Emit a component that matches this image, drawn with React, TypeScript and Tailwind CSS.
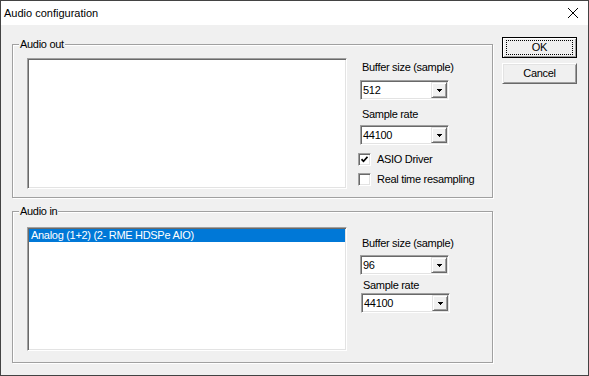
import { ReactNode } from "react";

const sunken =
  "border border-t-[#a0a0a0] border-l-[#a0a0a0] border-r-white border-b-white shadow-[inset_1px_1px_0_#696969,inset_-1px_-1px_0_#e3e3e3]";

const GroupBox = ({
  title,
  className,
  children,
}: {
  title: string;
  className: string;
  children: ReactNode;
}) => (
  <div
    className={`relative w-[481px] border border-[#a0a0a0] shadow-[inset_1px_1px_0_#fff,1px_1px_0_#fff] ${className}`}
  >
    <span className="absolute left-[6px] top-[-7px] bg-[#f0f0f0] px-[1px] leading-[13px]">
      {title}
    </span>
    {children}
  </div>
);

const ComboBox = ({ value, className = "" }: { value: string; className?: string }) => (
  <div className={`flex h-[20px] w-[89px] items-stretch bg-white ${sunken} ${className}`}>
    <div className="flex flex-1 items-center pl-[2px] leading-[13px]">{value}</div>
    <div className="mr-[1px] my-[1px] flex w-[16px] items-center justify-center border border-t-[#e3e3e3] border-l-[#e3e3e3] border-r-[#696969] border-b-[#696969] bg-[#f0f0f0] shadow-[inset_1px_1px_0_#fff,inset_-1px_-1px_0_#a0a0a0]">
      <svg width="5" height="3" viewBox="0 0 5 3" shapeRendering="crispEdges">
        <rect x="0" y="0" width="5" height="1" fill="#000" />
        <rect x="1" y="1" width="3" height="1" fill="#000" />
        <rect x="2" y="2" width="1" height="1" fill="#000" />
      </svg>
    </div>
  </div>
);

const CheckBox = ({ label, checked, className = "" }: { label: string; checked?: boolean; className?: string }) => (
  <div className={`-ml-[2px] flex h-[13px] items-center gap-[6px] ${className}`}>
    <div className={`flex h-[13px] w-[13px] items-center justify-center bg-white ${sunken}`}>
      {checked && (
        <svg width="7" height="7" viewBox="0 0 7 7">
          <path d="M0.5 3.2 L2.5 5.3 L6.5 0.8" fill="none" stroke="#000" strokeWidth="1.7" />
        </svg>
      )}
    </div>
    <span className="leading-[13px]">{label}</span>
  </div>
);

const AudioConfig = () => {
  return (
    <div className="flex h-[376px] w-[589px] flex-col border border-[#434343] bg-[#f0f0f0] font-['Liberation_Sans',Arial,sans-serif] text-[11px] tracking-[-0.3px] text-black">
      <div className="flex h-[24px] items-center justify-between bg-white pl-[3px] pr-[10px]">
        <span className="text-[11px] tracking-normal">Audio configuration</span>
        <svg width="10" height="10" viewBox="0 0 10 10">
          <path d="M0 0 L10 10 M10 0 L0 10" stroke="#000" strokeWidth="1" />
        </svg>
      </div>

      <div className="flex pl-[11px] pt-[12px]">
        <div className="mt-[7px] flex flex-col">
          <GroupBox title="Audio out" className="h-[154px]">
            <div className="flex pl-[14px] pt-[13px]">
              <div className={`h-[131px] w-[320px] bg-white ${sunken}`} />
              <div className="ml-[13px] flex flex-col">
                <span className="ml-[2px] mt-[3px] leading-[13px]">Buffer size (sample)</span>
                <ComboBox value="512" className="mt-[6px]" />
                <span className="ml-[2px] mt-[8px] leading-[13px]">Sample rate</span>
                <ComboBox value="44100" className="mt-[4px]" />
                <CheckBox label="ASIO Driver" checked className="mt-[8px]" />
                <CheckBox label="Real time resampling" className="mt-[7px]" />
              </div>
            </div>
          </GroupBox>

          <GroupBox title="Audio in" className="mt-[13px] h-[152px]">
            <div className="flex pl-[14px] pt-[15px]">
              <div className={`h-[124px] w-[320px] bg-white p-[1px] ${sunken}`}>
                <div className="flex h-[13px] items-center bg-[#0078d7] pl-[2px] leading-[13px] text-white">
                  Analog (1+2) (2- RME HDSPe AIO)
                </div>
              </div>
              <div className="ml-[13px] flex flex-col">
                <span className="ml-[2px] mt-[10px] leading-[13px]">Buffer size (sample)</span>
                <ComboBox value="96" className="mt-[5px]" />
                <span className="ml-[3px] mt-[4px] leading-[13px]">Sample rate</span>
                <ComboBox value="44100" className="ml-[1px] mt-[1px]" />
              </div>
            </div>
          </GroupBox>
        </div>

        <div className="ml-[9px] flex flex-col gap-[5px]">
          <button
            type="button"
            className="flex h-[21px] w-[75px] items-center justify-center border border-black bg-[#f0f0f0] shadow-[inset_1px_1px_0_#fff,inset_-1px_-1px_0_#a0a0a0]"
          >
            <span className="flex h-[15px] w-[67px] items-center justify-center border border-dotted border-black leading-[13px]">
              OK
            </span>
          </button>
          <button
            type="button"
            className="flex h-[21px] w-[75px] items-center justify-center border border-t-white border-l-white border-r-[#696969] border-b-[#696969] bg-[#f0f0f0] leading-[13px] shadow-[inset_1px_1px_0_#e3e3e3,inset_-1px_-1px_0_#a0a0a0]"
          >
            Cancel
          </button>
        </div>
      </div>
    </div>
  );
};

export default function App() {
  return <AudioConfig />;
}
